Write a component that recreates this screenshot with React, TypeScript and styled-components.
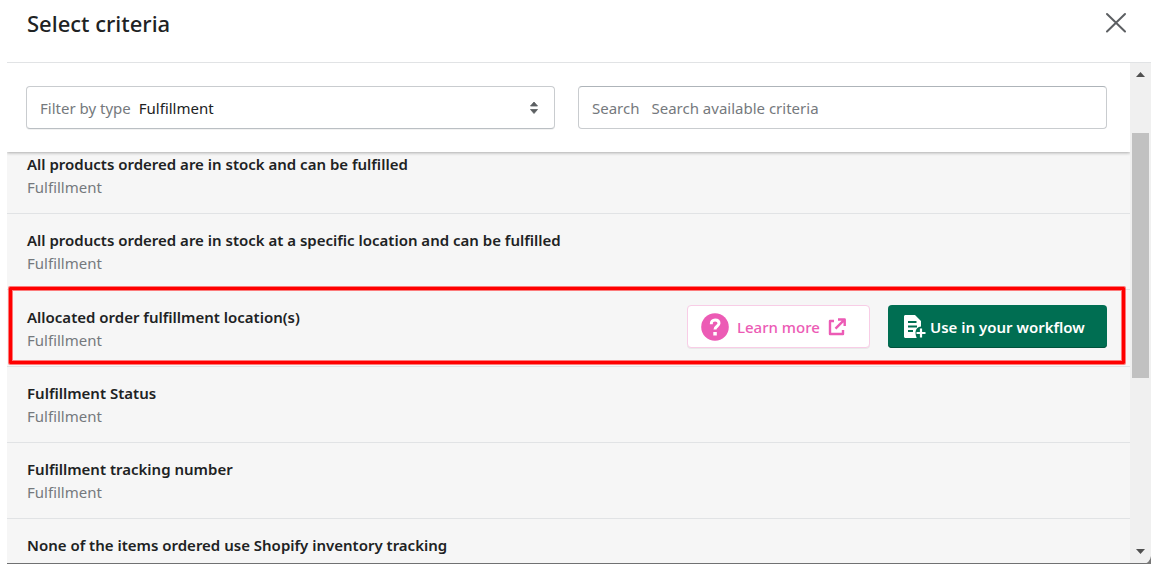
import React from "react";
import styled, { createGlobalStyle, css } from "styled-components";

const GlobalStyle = createGlobalStyle`
  *, *::before, *::after { box-sizing: border-box; }
  body { margin: 0; background: #fff; }
  body, button, input, select {
    font-family: "Noto Sans", "Open Sans", sans-serif;
    font-size: 15px;
    line-height: 24px;
    color: #202223;
  }
`;

const Page = styled.div`
  height: 100vh;
  padding: 0 3px 5px 7px;
`;

const Dialog = styled.section`
  position: relative;
  display: flex;
  flex-direction: column;
  height: 100%;
  background: #fff;
  border-bottom: 1px solid #707172;
`;

const Header = styled.header`
  display: flex;
  justify-content: space-between;
  align-items: center;
  height: 63px;
  flex: none;
  padding: 0 20px 16px;
  border-bottom: 1px solid #e1e3e5;
`;

const Title = styled.h1`
  margin: 0;
  font-size: 22px;
  line-height: 28px;
  font-weight: 500;
`;

const CloseButton = styled.button`
  display: flex;
  padding: 4px;
  border: 0;
  background: none;
  cursor: pointer;
`;

const Body = styled.div`
  display: flex;
  flex: 1;
  min-height: 0;
`;

const Content = styled.div`
  flex: 1;
  min-width: 0;
  overflow: hidden;
  background: #f6f6f6;
`;

const Filters = styled.div`
  position: relative;
  z-index: 1;
  display: grid;
  grid-template-columns: 1fr 1fr;
  gap: 23px;
  padding: 23px 23px 23px 19px;
  background: #fff;
  box-shadow: 0 1px 3px rgba(0, 0, 0, 0.3);
`;

const Field = styled.div<{ $inset?: boolean }>`
  display: flex;
  align-items: center;
  height: 43px;
  padding: 0 16px 0 13px;
  border: 1px solid #c9cccf;
  border-radius: 4px;
  background: #fff;
  ${(p) =>
    p.$inset
      ? css`border-top-color: #aeb4b9;`
      : css`border-bottom-color: #babfc3;
            box-shadow: 0 1px 0 rgba(0, 0, 0, 0.05);`}
`;

const FieldLabel = styled.label<{ $gap: number }>`
  color: #75797d;
  white-space: nowrap;
  margin-right: ${(p) => p.$gap}px;
`;

const fieldControl = css`
  flex: 1;
  min-width: 0;
  padding: 0;
  border: 0;
  outline: 0;
  background: transparent;
`;

const Select = styled.select`
  ${fieldControl}
  appearance: none;
`;

const Input = styled.input`
  ${fieldControl}
  &::placeholder { color: #75797d; opacity: 1; }
`;

const List = styled.ul`
  margin: -14px 0 0;
  padding: 0;
  list-style: none;
`;

const Row = styled.li`
  position: relative;
  display: flex;
  align-items: center;
  justify-content: space-between;
  min-height: 76px;
  padding: 14px 23px 14px 20px;
  border-bottom: 1px solid #e1e3e5;
`;

const RowTitle = styled.h2`
  margin: 0;
  font-size: 15px;
  line-height: 24px;
  font-weight: 600;
`;

const RowType = styled.p`
  margin: 0;
  line-height: 23px;
  color: #75797d;
`;

const Actions = styled.div`
  display: flex;
  gap: 18px;
  padding: 1px 0 4px;
`;

const actionStyle = css`
  display: flex;
  align-items: center;
  height: 43px;
  border-radius: 4px;
  white-space: nowrap;
  cursor: pointer;
`;

const LearnMore = styled.a`
  ${actionStyle}
  gap: 8px;
  width: 183px;
  padding: 0 13px;
  border: 1px solid #f8cde6;
  background: #fff;
  box-shadow: 0 1px 0 rgba(0, 0, 0, 0.05);
  color: #ec5bb5;
  font-weight: 500;
  text-decoration: none;
`;

const UseButton = styled.button`
  ${actionStyle}
  gap: 4px;
  width: 219px;
  padding: 0 15px;
  border: 0;
  background: #006e52;
  box-shadow: inset 0 -1px 0 #00523c;
  color: #fff;
  font-weight: 600;
`;

const Highlight = styled.div`
  position: absolute;
  inset: -3px 5px 2px 2px;
  border: 3px solid #f00;
  border-radius: 1px;
  box-shadow: 0 0 0 1px rgba(255, 0, 0, 0.5), inset 0 0 0 1px rgba(255, 0, 0, 0.5);
  pointer-events: none;
`;

const Scrollbar = styled.div`
  display: flex;
  flex-direction: column;
  align-items: center;
  width: 21px;
  padding: 8px 0;
  background: #f0f0f0;
`;

const Track = styled.div`
  flex: 1;
  width: 17px;
  padding-top: 55px;
`;

const Thumb = styled.div`
  height: 59%;
  background: #c1c1c1;
`;

const Corner = styled.svg`
  position: absolute;
  right: 0;
  bottom: -1px;
`;

const CloseIcon = () => (
  <svg width="22" height="22" viewBox="0 0 22 22" fill="none" stroke="#5c5f62" strokeWidth="2" strokeLinecap="round">
    <path d="M2 2 20 19.500M20 2 2 19.500" />
  </svg>
);

const SortIcon = () => (
  <svg width="8" height="14" viewBox="0 0 8 14" fill="#5c5f62">
    <path d="M4 1 7.500 5H.5ZM4 12.500 .5 8.500H7.500Z" stroke="#5c5f62" strokeWidth=".8" strokeLinejoin="round" />
  </svg>
);

const QuestionIcon = () => (
  <svg width="28" height="28" viewBox="0 0 28 28" fill="none">
    <circle cx="14" cy="14" r="13.800" fill="#ec5bb5" />
    <path d="M10.300 11.200C10.200 8.500 11.700 7 14.100 7c2.300 0 3.900 1.300 3.900 3.300 0 3.100-4 2.800-4 6.200" stroke="#fff" strokeWidth="3" />
    <path d="M12.300 19h3.500v3.500h-3.500z" fill="#fff" />
  </svg>
);

const ExternalIcon = () => (
  <svg width="18" height="18" viewBox="0 0 18 18" fill="none" stroke="#ec5bb5" strokeWidth="2.400">
    <path d="M6 3H2v13h13v-4M10 1.500h6.700v6.500M16.500 1.700 7.500 10.700" strokeLinejoin="round" />
  </svg>
);

const WorkflowIcon = () => (
  <svg width="23" height="25" viewBox="0 0 23 25" fill="none">
    <path d="M2.500 1H12l6 6v5.500c-3.200.4-5.300 2.600-5.500 5.500-.1 2 .3 4 1.200 6H2.500C1.600 24 1 23.400 1 22.500V2.500C1 1.600 1.600 1 2.500 1Z" fill="#fff" />
    <path d="M5 8h8.500M5 12.500h9M5 17h5" stroke="#006e52" strokeWidth="2" />
    <path d="M18 14.500v9M13.500 19H22.500" stroke="#fff" strokeWidth="2.200" />
  </svg>
);

const Arrow = ({ down = false }: { down?: boolean }) => (
  <svg width="9" height="7" viewBox="0 0 9 7" fill="#505050">
    <path d={down ? "M0 1h9L4.500 6Z" : "M0 6h9L4.500 1Z"} />
  </svg>
);

const criteria = [
  { name: "All products ordered are in stock and can be fulfilled", type: "Fulfillment" },
  { name: "All products ordered are in stock at a specific location and can be fulfilled", type: "Fulfillment" },
  { name: "Allocated order fulfillment location(s)", type: "Fulfillment", active: true },
  { name: "Fulfillment Status", type: "Fulfillment" },
  { name: "Fulfillment tracking number", type: "Fulfillment" },
  { name: "None of the items ordered use Shopify inventory tracking", type: "\u00a0" },
];

export default function App() {
  return (
    <>
      <GlobalStyle />
      <Page>
        <Dialog role="dialog" aria-labelledby="dialog-title">
          <Header>
            <Title id="dialog-title">Select criteria</Title>
            <CloseButton aria-label="Close"><CloseIcon /></CloseButton>
          </Header>
          <Body>
            <Content>
              <Filters>
                <Field>
                  <FieldLabel htmlFor="type" $gap={8}>Filter by type</FieldLabel>
                  <Select id="type" defaultValue="Fulfillment">
                    <option>Fulfillment</option>
                  </Select>
                  <SortIcon />
                </Field>
                <Field $inset>
                  <FieldLabel htmlFor="search" $gap={12}>Search</FieldLabel>
                  <Input id="search" placeholder="Search available criteria" />
                </Field>
              </Filters>
              <List>
                {criteria.map((item) => (
                  <Row key={item.name}>
                    <div>
                      <RowTitle>{item.name}</RowTitle>
                      <RowType>{item.type}</RowType>
                    </div>
                    {item.active && (
                      <>
                        <Actions>
                          <LearnMore href="#learn"><QuestionIcon />Learn more<ExternalIcon /></LearnMore>
                          <UseButton><WorkflowIcon />Use in your workflow</UseButton>
                        </Actions>
                        <Highlight />
                      </>
                    )}
                  </Row>
                ))}
              </List>
            </Content>
            <Scrollbar aria-hidden="true">
              <Arrow />
              <Track><Thumb /></Track>
              <Arrow down />
            </Scrollbar>
          </Body>
          <Corner width="8" height="8" viewBox="0 0 8 8"><path d="M8 0v8H0Q7 7 8 0Z" fill="#777" /></Corner>
        </Dialog>
      </Page>
    </>
  );
}
